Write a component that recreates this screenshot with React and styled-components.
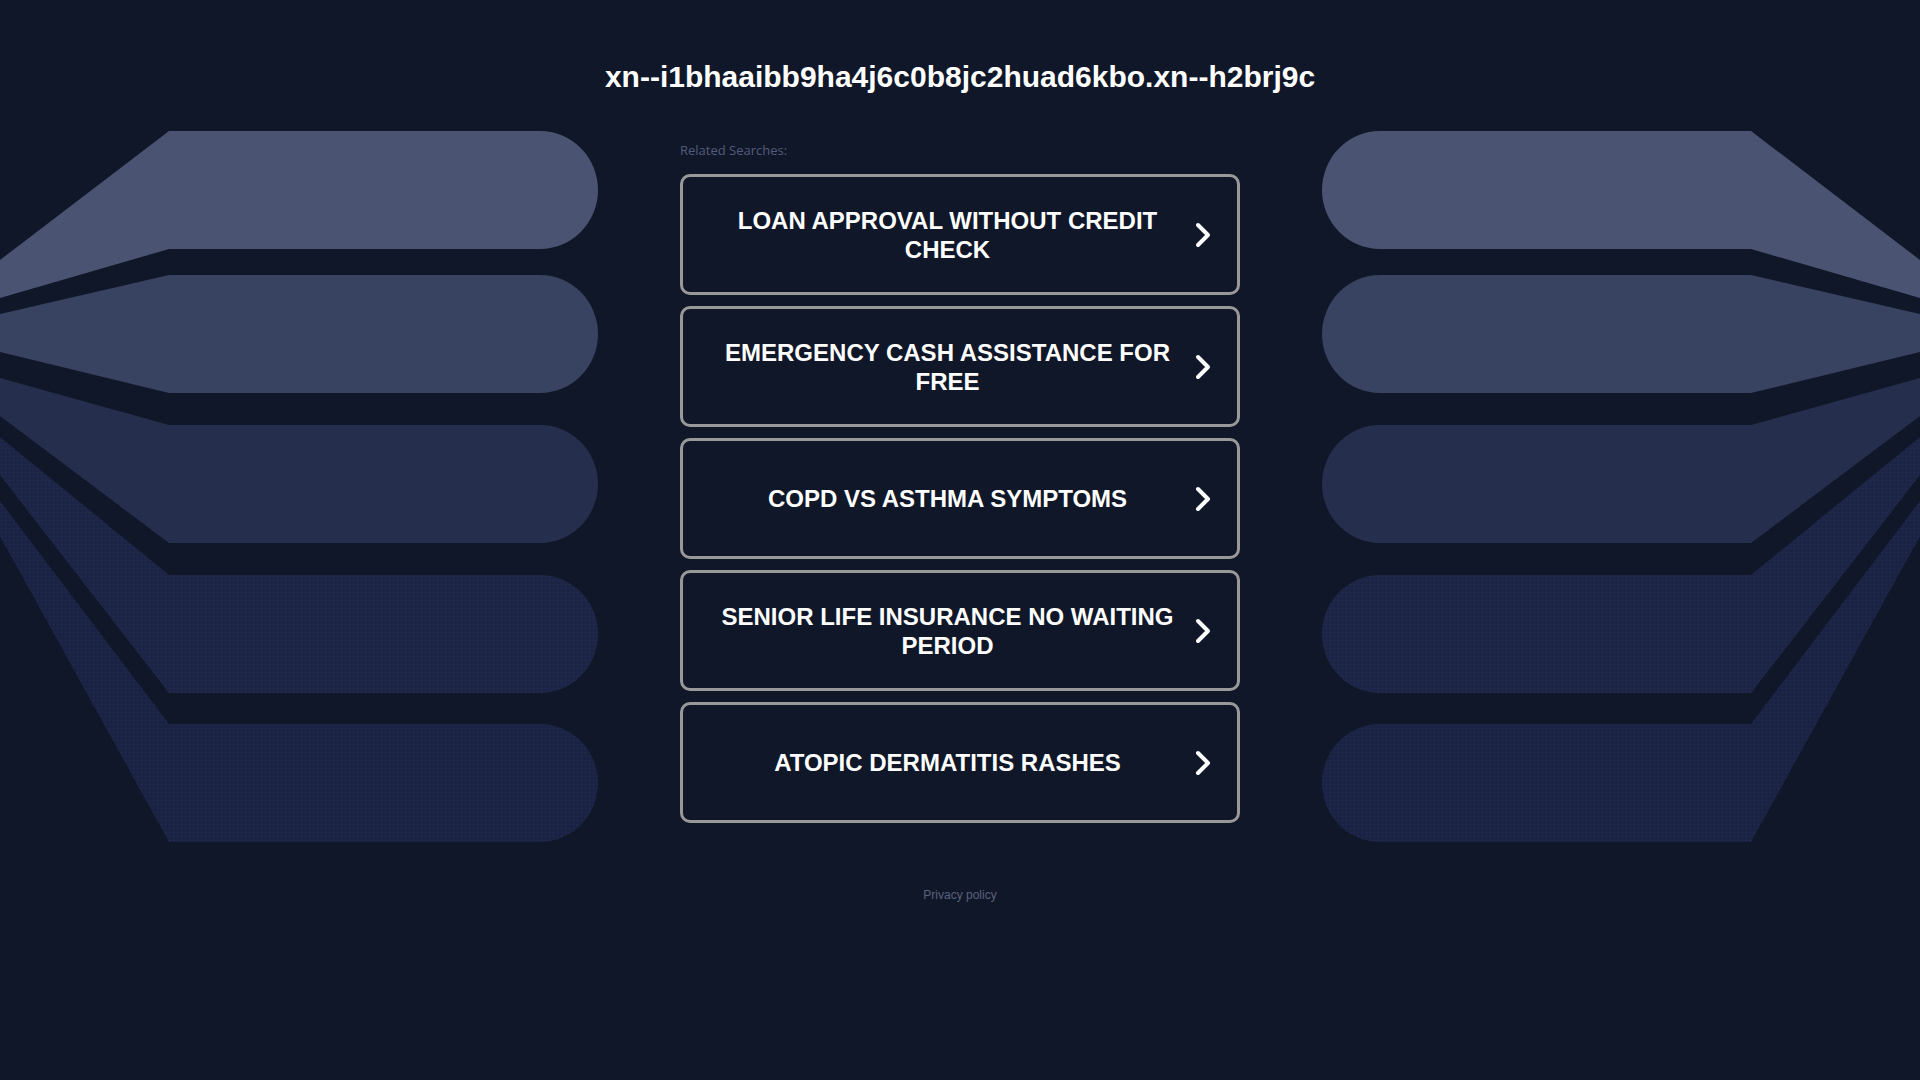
import React from 'react';
import styled, { createGlobalStyle } from 'styled-components';

const GlobalStyle = createGlobalStyle`
  html, body {
    margin: 0;
    padding: 0;
    background: #101729;
  }
  body {
    font-family: "Liberation Sans", Arial, sans-serif;
  }
`;

const Page = styled.div`
  width: 1920px;
  min-height: 1080px;
  background: #101729;
  display: flex;
  flex-direction: column;
  align-items: center;
`;

const Title = styled.h1`
  margin: 0;
  padding-top: 59px;
  font-size: 30px;
  line-height: 36px;
  font-weight: 700;
  color: #ffffff;
  text-align: center;
`;

const Stage = styled.div`
  margin-top: 36px;
  width: 100%;
  display: flex;
  justify-content: space-between;
  align-items: flex-start;
`;

const Art = styled.svg`
  display: block;
  flex: 0 0 598px;
  transform: ${(p) => (p.$flip ? 'scaleX(-1)' : 'none')};
`;

const Column = styled.div`
  width: 560px;
  padding-top: 11px;
  display: flex;
  flex-direction: column;
`;

const Related = styled.div`
  font-family: "Open Sans", sans-serif;
  font-size: 13px;
  line-height: 16px;
  color: #535c7b;
  margin-bottom: 16px;
`;

const List = styled.div`
  display: flex;
  flex-direction: column;
  gap: 11px;
`;

const SearchLink = styled.a`
  box-sizing: border-box;
  height: 121px;
  border: 3px solid #999999;
  border-radius: 10px;
  padding: 0 26px 0 21px;
  display: flex;
  align-items: center;
  gap: 4px;
  text-decoration: none;
  cursor: pointer;
`;

const LinkText = styled.span`
  flex: 1;
  text-align: center;
  color: #ffffff;
  font-size: 24px;
  line-height: 29px;
  font-weight: 700;
  text-transform: uppercase;
`;

const Chevron = styled.svg`
  flex: 0 0 16px;
`;

const Footer = styled.div`
  margin-top: 44px;
  font-size: 12px;
  line-height: 16px;
  color: #5a627c;
`;

const searches = [
  'Loan Approval Without Credit Check',
  'Emergency Cash Assistance For Free',
  'COPD vs Asthma Symptoms',
  'Senior Life Insurance No Waiting Period',
  'Atopic Dermatitis Rashes',
];

// left decoration, right one is the same drawing mirrored
const bands = [
  { top: 0, lt: 129, lb: 167, fill: '#4a5472' },
  { top: 144, lt: 183, lb: 221, fill: '#384261' },
  { top: 294, lt: 247, lb: 285, fill: '#252e4d' },
  { top: 444, lt: 306, lb: 344, dots: 'A' },
  { top: 593, lt: 370, lb: 405, dots: 'B' },
];

const bandPath = ({ top, lt, lb }) => {
  const b = top + 118;
  return `M169 ${top} L540 ${top} A58 59 0 0 1 540 ${b} L169 ${b} L0 ${lb} L0 ${lt} Z`;
};

const Decoration = ({ flip }) => {
  const side = flip ? 'r' : 'l';
  return (
    <Art $flip={flip} width="598" height="712" viewBox="0 0 598 712">
      <defs>
        <pattern id={`dotsA${side}`} width="4" height="4" patternUnits="userSpaceOnUse">
          <rect width="4" height="4" fill="#1c2546" />
          <rect x="1" y="1" width="1" height="1" fill="#27325a" />
        </pattern>
        <pattern id={`dotsB${side}`} width="4" height="4" patternUnits="userSpaceOnUse">
          <rect width="4" height="4" fill="#1a2344" />
          <rect x="1" y="1" width="1" height="1" fill="#263158" />
        </pattern>
      </defs>
      {bands.map((band, i) => (
        <path
          key={i}
          d={bandPath(band)}
          fill={band.dots ? `url(#dots${band.dots}${side})` : band.fill}
        />
      ))}
    </Art>
  );
};

const App = () => {
  return (
    <Page>
      <GlobalStyle />
      <Title>xn--i1bhaaibb9ha4j6c0b8jc2huad6kbo.xn--h2brj9c</Title>
      <Stage>
        <Decoration />
        <Column>
          <Related>Related Searches:</Related>
          <List>
            {searches.map((s) => (
              <SearchLink key={s}>
                <LinkText>{s}</LinkText>
                <Chevron width="16" height="26" viewBox="0 0 16 26">
                  <polyline
                    points="3,3 13,13 3,23"
                    fill="none"
                    stroke="#ffffff"
                    strokeWidth="4"
                    strokeLinecap="round"
                    strokeLinejoin="round"
                  />
                </Chevron>
              </SearchLink>
            ))}
          </List>
        </Column>
        <Decoration flip />
      </Stage>
      <Footer>Privacy policy</Footer>
    </Page>
  );
};

export default App;
